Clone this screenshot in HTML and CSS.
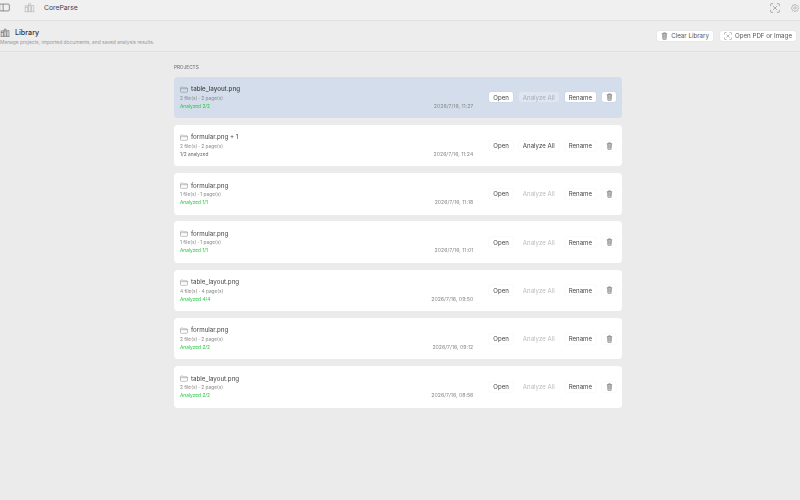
FILE: index.html
```html
<!DOCTYPE html>
<html lang="en">
<head>
	<meta charset="UTF-8">
	<title>CoreParse</title>
	<link rel="stylesheet" href="styles.css">
</head>
<body>
	<svg class="defs" width="0" height="0">
		<symbol id="i-folder" viewBox="0 0 16 14"><path d="M1 3.5 A1.5 1.5 0 0 1 2.5 2 H5.5 L7 3.5 H13.5 A1.5 1.5 0 0 1 15 5 V11 A1.5 1.5 0 0 1 13.5 12.5 H2.5 A1.5 1.5 0 0 1 1 11 Z M1 5.5 H15"></path></symbol>
		<symbol id="i-trash" viewBox="0 0 14 16"><path class="trash-body" d="M2.8 3.5 L3.5 14 A1 1 0 0 0 4.5 15 H9.5 A1 1 0 0 0 10.5 14 L11.2 3.5 Z"></path><path d="M1.5 3.5 H12.5 M5 3.5 V2 A1 1 0 0 1 6 1 H8 A1 1 0 0 1 9 2 V3.5 M5.5 6 V12.5 M8.5 6 V12.5"></path></symbol>
		<symbol id="i-books" viewBox="0 0 18 16"><path d="M1 15 H17 M2 15 V5 H6 V15 M7.5 15 V2 H11 V15 M12.5 15 V5 L16 4.5 V15 M2 8 H6 M7.5 5 H11"></path></symbol>
		<symbol id="i-scan" viewBox="0 0 16 16"><path d="M1 5 V2.5 A1.5 1.5 0 0 1 2.5 1 H5 M11 1 H13.5 A1.5 1.5 0 0 1 15 2.5 V5 M15 11 V13.5 A1.5 1.5 0 0 1 13.5 15 H11 M5 15 H2.5 A1.5 1.5 0 0 1 1 13.5 V11 M5 5 L11 11 M11 5 L5 11"></path></symbol>
	</svg>

	<header class="toolbar">
		<svg class="tool-icon sidebar-icon" viewBox="0 0 16 12"><path d="M1 2.5 A1.5 1.5 0 0 1 2.5 1 H13.5 A1.5 1.5 0 0 1 15 2.5 V9.5 A1.5 1.5 0 0 1 13.5 11 H2.5 A1.5 1.5 0 0 1 1 9.5 Z M6 1 V11"></path></svg>
		<svg class="tool-icon books-light"><use href="#i-books"></use></svg>
		<span class="app-name">CoreParse</span>
		<span class="spacer"></span>
		<svg class="tool-icon scan-icon"><use href="#i-scan"></use></svg>
		<svg class="tool-icon gear-icon" viewBox="0 0 16 16"><circle cx="8" cy="8" r="2.4"></circle><path d="M6.8 1 H9.2 L9.6 3 L11.3 3.8 L13 2.7 L14.6 4.5 L13.4 6.1 L13.9 7.2 L15 8 L15 9 L13.8 9.6 L13.3 11 L14 12.8 L12.3 14.3 L10.6 13.2 L9.3 13.8 L9 15 H7 L6.6 13.8 L5.2 13.2 L3.5 14.2 L1.9 12.6 L2.9 11 L2.3 9.6 L1 9 V7 L2.4 6.4 L2.9 5 L2 3.3 L3.6 1.8 L5.3 2.9 L6.5 2.4 Z"></path></svg>
	</header>

	<section class="page-head">
		<div class="head-text">
			<div class="head-title">
				<svg class="head-icon"><use href="#i-books"></use></svg>
				<span>Library</span>
			</div>
			<p class="head-sub">Manage projects, imported documents, and saved analysis results.</p>
		</div>
		<button class="btn head-btn"><svg class="btn-icon"><use href="#i-trash"></use></svg>Clear Library</button>
		<button class="btn head-btn"><svg class="btn-icon scan-btn"><use href="#i-scan"></use></svg>Open PDF or Image</button>
	</section>

	<main class="content">
		<h2 class="section-label">PROJECTS</h2>
		<div class="project-list">
			<article class="card selected">
				<div class="card-info">
					<div class="card-title"><svg class="folder"><use href="#i-folder"></use></svg>table_layout.png</div>
					<div class="meta">2 file(s) · 2 page(s)</div>
					<div class="status-row"><span class="status done">Analyzed 2/2</span><span class="date">2026/7/16, 11:27</span></div>
				</div>
				<div class="actions">
					<button class="btn">Open</button>
					<button class="btn disabled">Analyze All</button>
					<button class="btn">Rename</button>
					<button class="btn trash"><svg class="btn-icon"><use href="#i-trash"></use></svg></button>
				</div>
			</article>
			<article class="card">
				<div class="card-info">
					<div class="card-title"><svg class="folder"><use href="#i-folder"></use></svg>formular.png + 1</div>
					<div class="meta">2 file(s) · 2 page(s)</div>
					<div class="status-row"><span class="status">1/2 analyzed</span><span class="date">2026/7/16, 11:24</span></div>
				</div>
				<div class="actions">
					<button class="btn">Open</button>
					<button class="btn">Analyze All</button>
					<button class="btn">Rename</button>
					<button class="btn trash"><svg class="btn-icon"><use href="#i-trash"></use></svg></button>
				</div>
			</article>
			<article class="card">
				<div class="card-info">
					<div class="card-title"><svg class="folder"><use href="#i-folder"></use></svg>formular.png</div>
					<div class="meta">1 file(s) · 1 page(s)</div>
					<div class="status-row"><span class="status done">Analyzed 1/1</span><span class="date">2026/7/16, 11:18</span></div>
				</div>
				<div class="actions">
					<button class="btn">Open</button>
					<button class="btn disabled">Analyze All</button>
					<button class="btn">Rename</button>
					<button class="btn trash"><svg class="btn-icon"><use href="#i-trash"></use></svg></button>
				</div>
			</article>
			<article class="card">
				<div class="card-info">
					<div class="card-title"><svg class="folder"><use href="#i-folder"></use></svg>formular.png</div>
					<div class="meta">1 file(s) · 1 page(s)</div>
					<div class="status-row"><span class="status done">Analyzed 1/1</span><span class="date">2026/7/16, 11:01</span></div>
				</div>
				<div class="actions">
					<button class="btn">Open</button>
					<button class="btn disabled">Analyze All</button>
					<button class="btn">Rename</button>
					<button class="btn trash"><svg class="btn-icon"><use href="#i-trash"></use></svg></button>
				</div>
			</article>
			<article class="card">
				<div class="card-info">
					<div class="card-title"><svg class="folder"><use href="#i-folder"></use></svg>table_layout.png</div>
					<div class="meta">4 file(s) · 4 page(s)</div>
					<div class="status-row"><span class="status done">Analyzed 4/4</span><span class="date">2026/7/16, 09:50</span></div>
				</div>
				<div class="actions">
					<button class="btn">Open</button>
					<button class="btn disabled">Analyze All</button>
					<button class="btn">Rename</button>
					<button class="btn trash"><svg class="btn-icon"><use href="#i-trash"></use></svg></button>
				</div>
			</article>
			<article class="card">
				<div class="card-info">
					<div class="card-title"><svg class="folder"><use href="#i-folder"></use></svg>formular.png</div>
					<div class="meta">2 file(s) · 2 page(s)</div>
					<div class="status-row"><span class="status done">Analyzed 2/2</span><span class="date">2026/7/16, 09:12</span></div>
				</div>
				<div class="actions">
					<button class="btn">Open</button>
					<button class="btn disabled">Analyze All</button>
					<button class="btn">Rename</button>
					<button class="btn trash"><svg class="btn-icon"><use href="#i-trash"></use></svg></button>
				</div>
			</article>
			<article class="card">
				<div class="card-info">
					<div class="card-title"><svg class="folder"><use href="#i-folder"></use></svg>table_layout.png</div>
					<div class="meta">2 file(s) · 2 page(s)</div>
					<div class="status-row"><span class="status done">Analyzed 2/2</span><span class="date">2026/7/16, 08:56</span></div>
				</div>
				<div class="actions">
					<button class="btn">Open</button>
					<button class="btn disabled">Analyze All</button>
					<button class="btn">Rename</button>
					<button class="btn trash"><svg class="btn-icon"><use href="#i-trash"></use></svg></button>
				</div>
			</article>
		</div>
	</main>
</body>
</html>
```

FILE: styles.css
```css
*{
	box-sizing: border-box;
}
html, body{
	height: 100%;
}
body{
	margin: 0;
	background: #ebebeb;
	font-family: Inter, "Liberation Sans", sans-serif;
	color: #333;
	overflow: hidden;
	filter: blur(.35px);
}
svg{
	fill: none;
	stroke: currentColor;
	stroke-width: .9;
}
.defs{
	position: absolute;
}
.trash-body{
	fill: #ccc;
}
.toolbar{
	height: 21px;
	display: flex;
	align-items: center;
	padding-bottom: 5px;
	background: #f0f0f0;
	border-bottom: 1px solid #e0e0e0;
	color: #555;
}
.tool-icon{
	flex: none;
	width: 11px;
	height: 11px;
}
.sidebar-icon{
	width: 11px;
	margin-left: -1px;
}
.books-light{
	margin-left: 14px;
	color: #aaa;
}
.app-name{
	margin-left: 9px;
	font-size: 6.8px;
	color: #444;
}
.spacer{
	flex: 1;
}
.scan-icon{
	color: #777;
	width: 10px;
	height: 10px;
}
.gear-icon{
	margin-left: 11px;
	margin-right: 1px;
	width: 8px;
	height: 8px;
	color: #888;
}
.page-head{
	height: 31px;
	display: flex;
	align-items: center;
	gap: 7px;
	padding: 0 4px 1px 0;
	border-bottom: 1px solid #e0e0e0;
	background: #ededed;
}
.head-text{
	flex: 1;
	padding-top: 1px;
}
.head-title{
	display: flex;
	align-items: center;
	gap: 5px;
	font-size: 7.2px;
	font-weight: 500;
	color: #333;
}
.head-icon{
	width: 10px;
	height: 9px;
	color: #444;
}
.head-sub{
	margin: 2px 0 0;
	font-size: 4.9px;
	color: #999;
}
.btn{
	display: inline-flex;
	align-items: center;
	height: 10px;
	padding: 0 4px;
	border: 0;
	border-radius: 2px;
	background: #fff;
	font-family: inherit;
	font-size: 6.1px;
	color: #444;
	box-shadow: 0 0 1.5px rgba(0, 0, 0, .1);
}
.head-btn{
	gap: 3px;
	font-size: 6.2px;
	color: #555;
}
.btn-icon{
	width: 7px;
	height: 8px;
	color: #666;
}
.scan-btn{
	width: 8px;
}
.content{
	width: 452px;
	margin: 0 auto;
	padding: 11.5px 4px 0 0;
}
.section-label{
	margin: 0 0 7px;
	font-size: 4.7px;
	font-weight: 500;
	line-height: 6px;
	color: #777;
}
.project-list{
	display: flex;
	flex-direction: column;
	gap: 6.75px;
}
.card{
	height: 41.5px;
	display: flex;
	align-items: center;
	padding: 0 6px;
	background: #fff;
	border-radius: 4px;
}
.card.selected{
	background: #d3ddec;
}
.card-info{
	flex: 1;
	align-self: flex-start;
	padding: 8.5px 16px 0 0;
}
.card-title{
	display: flex;
	align-items: center;
	gap: 3px;
	font-size: 6.2px;
	line-height: 8px;
	color: #444;
}
.selected .card-title{
	font-weight: 500;
}
.folder{
	width: 8px;
	height: 7px;
	color: #777;
}
.meta{
	margin-top: 1.5px;
	font-size: 4.8px;
	line-height: 6px;
	color: #888;
}
.status-row{
	display: flex;
	justify-content: space-between;
	margin-top: 2.2px;
	font-size: 4.8px;
	line-height: 6px;
}
.status{
	color: #666;
}
.status.done{
	color: #28c840;
}
.date{
	font-size: 5.2px;
	color: #888;
}
.actions{
	display: flex;
	align-items: center;
	gap: 6px;
}
.disabled{
	color: #bbb;
	background: transparent;
	box-shadow: none;
}
.selected .disabled{
	background: #dfe6f1;
	color: #aab;
}
.trash{
	padding: 0 3.5px;
}
```
